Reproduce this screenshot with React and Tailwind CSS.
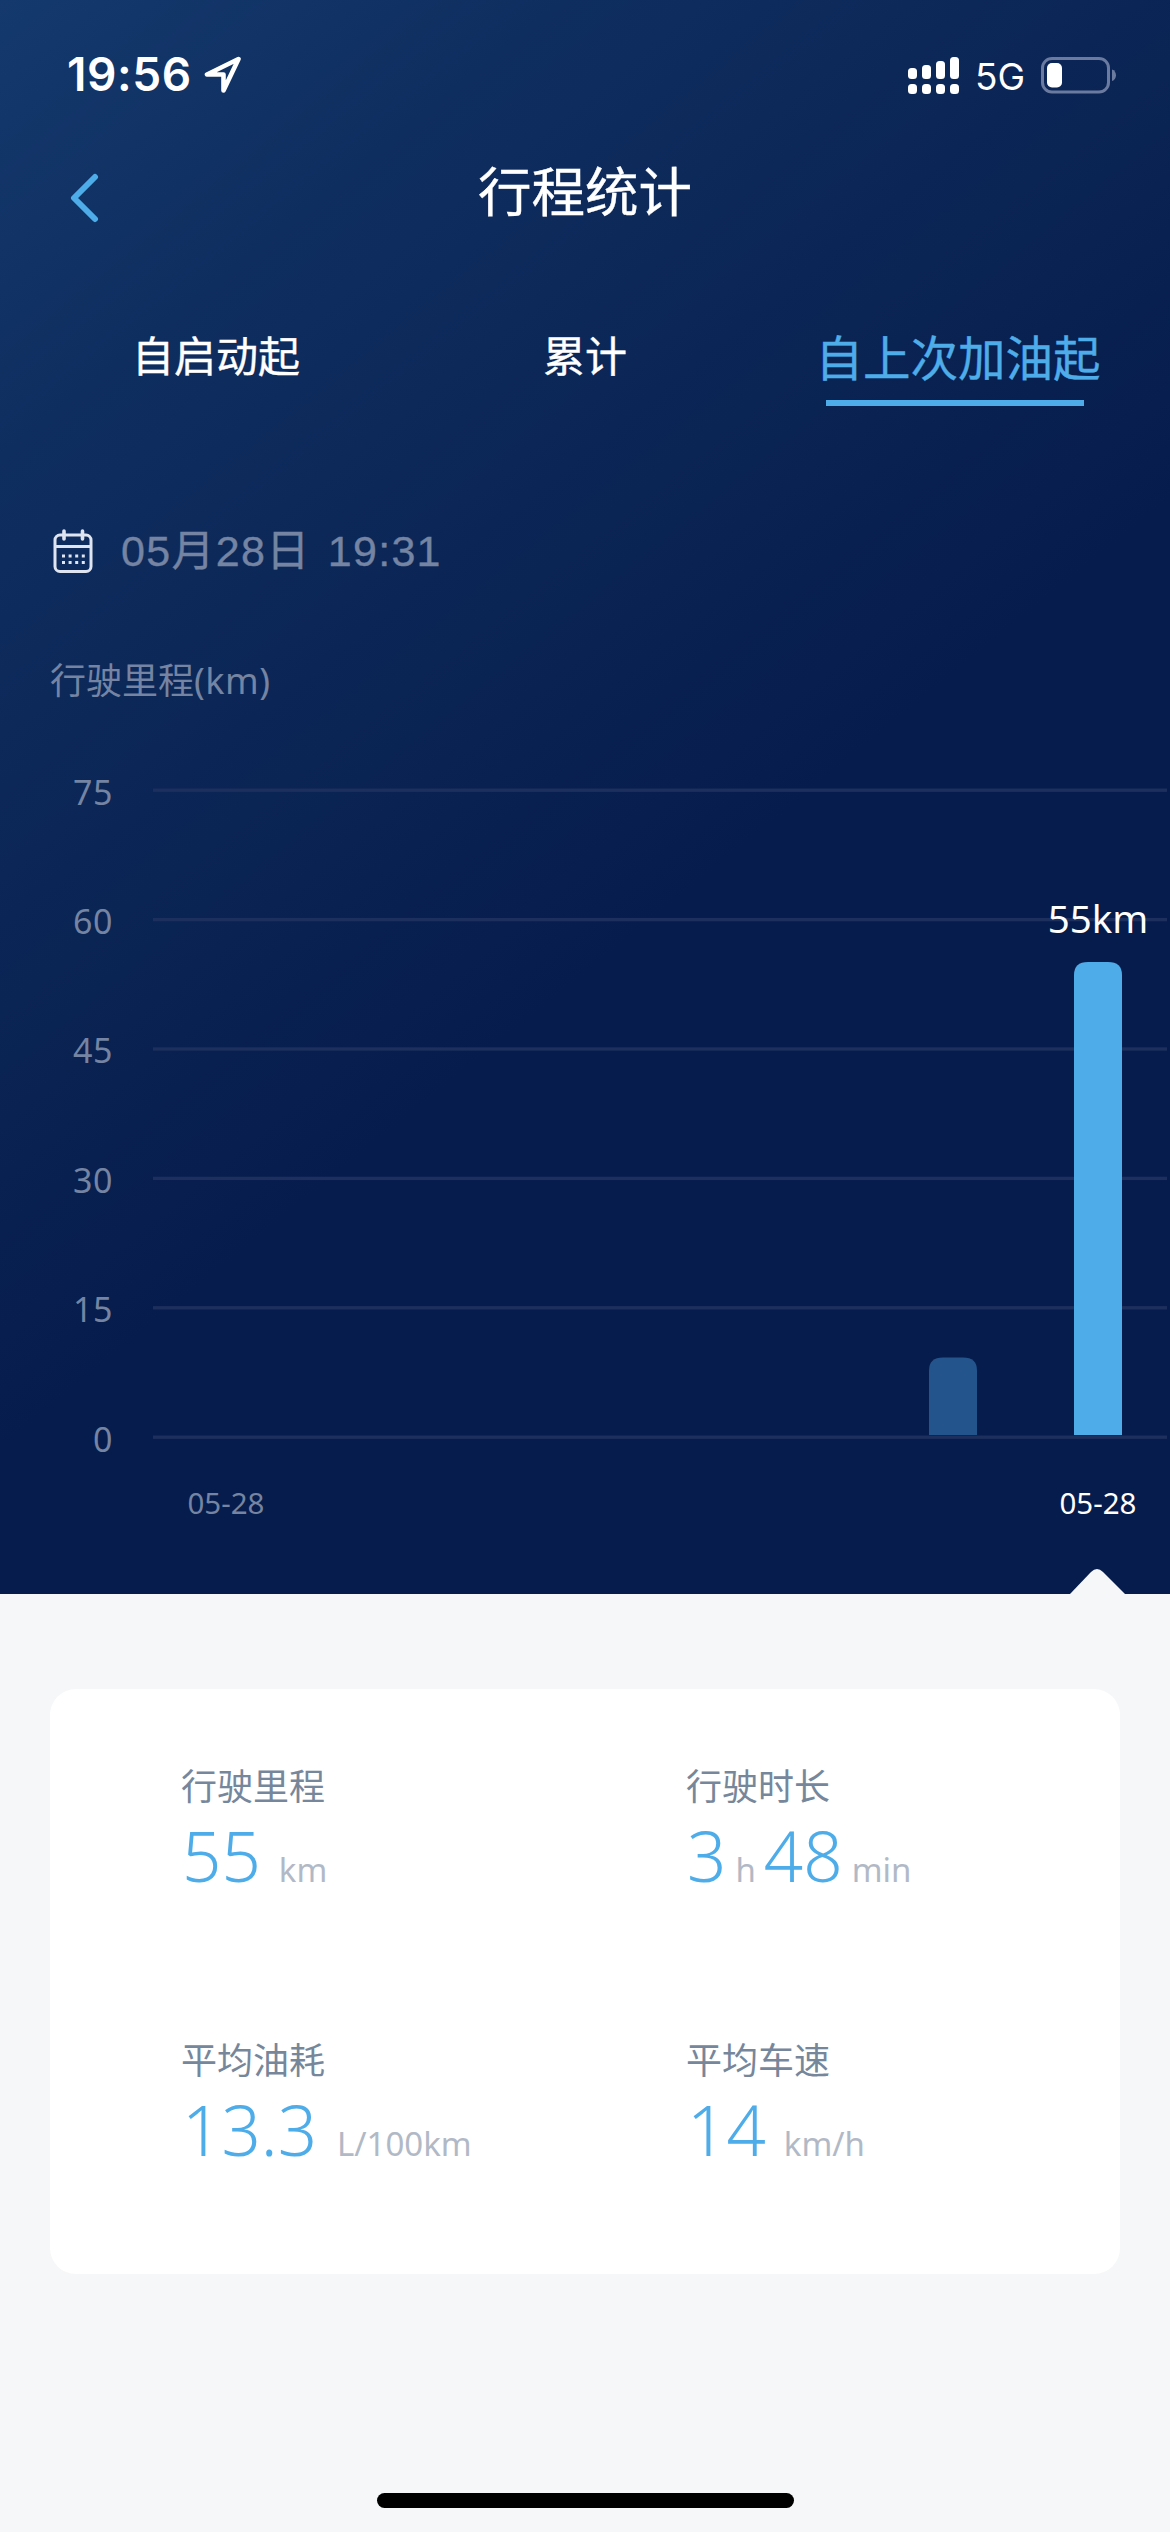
const tabs = ["自启动起", "累计", "自上次加油起"];

const ticks = [75, 60, 45, 30, 15, 0];

const bars = [
  { x: 929, value: 9, color: "#24548c" },
  { x: 1074, value: 55, color: "#4eace9" },
];

const stats = [
  { label: "行驶里程", parts: [["55", "km"]], unitGap: "ml-[18px]" },
  { label: "行驶时长", parts: [["3", "h"], ["48", "min"]], unitGap: "ml-[9px]" },
  { label: "平均油耗", parts: [["13.3", "L/100km"]], unitGap: "ml-[20px]" },
  { label: "平均车速", parts: [["14", "km/h"]], unitGap: "ml-[18px]" },
];

const StatusBar = () => {
  return (
    <div className="flex h-[150px] items-start justify-between pl-[67px] pr-[53px] pt-[56px] font-['Inter',sans-serif] text-white">
      <div className="flex items-center">
        <span className="text-[46px] leading-[37px] font-semibold tracking-[0.6px]">19:56</span>
        <svg className="ml-3 h-[37px] w-[38px]" viewBox="0 0 38 37" fill="none">
          <path d="M34.500 3L3 18.500H19.500V34.500Z" stroke="white" strokeWidth="4.6" strokeLinejoin="round" />
        </svg>
      </div>
      <div className="flex items-center">
        <svg className="h-[37px] w-[52px]" viewBox="0 0 52 37" fill="white">
          <rect x="0" y="11" width="9" height="11" rx="3.5" />
          <rect x="14" y="8" width="9" height="14" rx="3.5" />
          <rect x="28" y="4" width="9" height="18" rx="3.5" />
          <rect x="42" y="0" width="9" height="22" rx="3.5" />
          <rect x="0" y="27" width="9" height="10" rx="3.5" />
          <rect x="14" y="27" width="9" height="10" rx="3.5" />
          <rect x="28" y="27" width="9" height="10" rx="3.5" />
          <rect x="42" y="27" width="9" height="10" rx="3.5" />
        </svg>
        <span className="ml-[15px] mt-[2px] text-[37px] leading-[37px]">5G</span>
        <svg className="ml-[16px] h-[37px] w-[76px]" viewBox="0 0 76 37">
          <rect x="1.5" y="1.5" width="66" height="33.5" rx="9.5" fill="none" stroke="#6b7ba0" strokeWidth="3" />
          <rect x="6" y="6" width="15" height="24.5" rx="5" fill="white" />
          <path d="M71 12.5C76.300 14 76.300 22.500 71 24Z" fill="#6b7ba0" />
        </svg>
      </div>
    </div>
  );
};

const CalendarIcon = () => {
  return (
    <svg className="h-[45px] w-[42px]" viewBox="0 0 42 45" fill="none" stroke="#dfe5f0" strokeWidth="3">
      <rect x="3" y="6" width="36" height="36.500" rx="5" />
      <path d="M3 17.500H39" />
      <path d="M12 2V10M30.500 2V10" strokeWidth="3.600" strokeLinecap="round" />
      <path d="M10 27H33.500M10 33.500H33.500" strokeDasharray="3 3.600" />
    </svg>
  );
};

const Chart = () => {
  return (
    <svg className="block h-[870px] w-full" viewBox="0 724 1170 870">
      {ticks.map((tick, i) => (
        <g key={tick}>
          <rect x="153" y={788.5 + i * 129.4} width="1014" height="3.4" fill="#1d2f5c" />
          <text x="113" y={804.5 + i * 129.4} textAnchor="end" fontSize="34" letterSpacing="0.5" fill="#7484a2">{tick}</text>
        </g>
      ))}
      {bars.map(({ x, value, color }) => {
        const top = 1435 - value * 8.6;
        return (
          <path
            key={x}
            d={`M${x} 1435V${top + 13}Q${x} ${top} ${x + 14} ${top}H${x + 34}Q${x + 48} ${top} ${x + 48} ${top + 13}V1435Z`}
            fill={color}
          />
        );
      })}
      <text x="1098" y="933" textAnchor="middle" fontSize="38.500" fill="white">55km</text>
      <text x="226" y="1514" textAnchor="middle" fontSize="29.500" fill="#7484a2">05-28</text>
      <text x="1098" y="1514" textAnchor="middle" fontSize="29.500" fill="white">05-28</text>
      <path d="M1070 1594L1091 1572Q1097 1566 1103 1572L1125 1594Z" fill="#f5f7f9" />
    </svg>
  );
};

const Stat = ({ label, parts, unitGap }) => {
  return (
    <div className="h-[274px]">
      <div className="text-[36px] leading-[54px] text-[#77879b]">{label}</div>
      <div className="flex items-baseline pl-px leading-[82px]">
        {parts.map(([value, unit]) => (
          <div key={unit} className="mr-[8px]">
            <span className="text-[69px] font-light text-[#4eace9]">{value}</span>
            <span className={`${unitGap} text-[33px] text-[#b2b9c6]`}>{unit}</span>
          </div>
        ))}
      </div>
    </div>
  );
};

export default function App() {
  return (
    <div className="flex h-[2532px] w-[1170px] flex-col overflow-hidden bg-[#f5f7f9] font-['Noto_Sans','Noto_Sans_CJK_SC',sans-serif]">
      <div className="h-[1594px] bg-[linear-gradient(141deg,#14396d_0%,#0f2e60_18%,#0a2454_40%,#061c4c_57%,#061c4c_100%)]">
        <StatusBar />
        <div className="flex h-[150px] items-start justify-between px-[68px]">
          <svg className="mt-[23px] h-[50px] w-[32px]" viewBox="0 0 32 50" fill="none">
            <path d="M27 4L6 25L27 46" stroke="#4eace9" strokeWidth="6" strokeLinecap="round" strokeLinejoin="round" />
          </svg>
          <h1 className="-mt-[2px] font-['Noto_Sans_CJK_SC',sans-serif] text-[53.500px] leading-[82px] text-white [-webkit-text-stroke:0.4px_white]">行程统计</h1>
          <div className="w-[32px]" />
        </div>
        <div className="flex h-[216px] items-start font-['Noto_Sans_CJK_SC',sans-serif] text-white">
          <div className="w-[432px] pt-[22px] text-center text-[42px] leading-[64px] [-webkit-text-stroke:0.4px_white]">{tabs[0]}</div>
          <div className="w-[306px] pt-[22px] text-center text-[42px] leading-[64px] [-webkit-text-stroke:0.4px_white]">{tabs[1]}</div>
          <div className="flex w-[432px] flex-col items-center pt-[20px] text-[#4eace9]">
            <div className="pl-[8px] text-[47.500px] leading-[72px] [-webkit-text-stroke:0.4px_#4eace9]">{tabs[2]}</div>
            <div className="mt-[8px] ml-[2px] h-[6px] w-[258px] bg-[#4eace9]" />
          </div>
        </div>
        <div className="flex h-[130px] items-start pl-[52px] pt-[13px]">
          <CalendarIcon />
          <div className="ml-[27px] font-['Liberation_Sans','Noto_Sans_CJK_SC',sans-serif] text-[43px] leading-[44px] tracking-[1.300px] text-[#7484a2] [word-spacing:4px] [-webkit-text-stroke:0.4px_#7484a2]">05月28日 19:31</div>
        </div>
        <div className="h-[78px] pl-[50px] pt-[8px] text-[36px] leading-[54px] text-[#7484a2]">行驶里程<span className="tracking-[0.5px]">(km)</span></div>
        <Chart />
      </div>
      <div className="mx-[50px] mt-[95px] grid h-[585px] grid-cols-[505px_1fr] content-start rounded-[26px] bg-white pl-[131px] pt-[71px]">
        {stats.map((stat) => (
          <Stat key={stat.label} {...stat} />
        ))}
      </div>
      <div className="mx-auto mt-auto mb-[24px] h-[15px] w-[417px] rounded-full bg-black" />
    </div>
  );
}
